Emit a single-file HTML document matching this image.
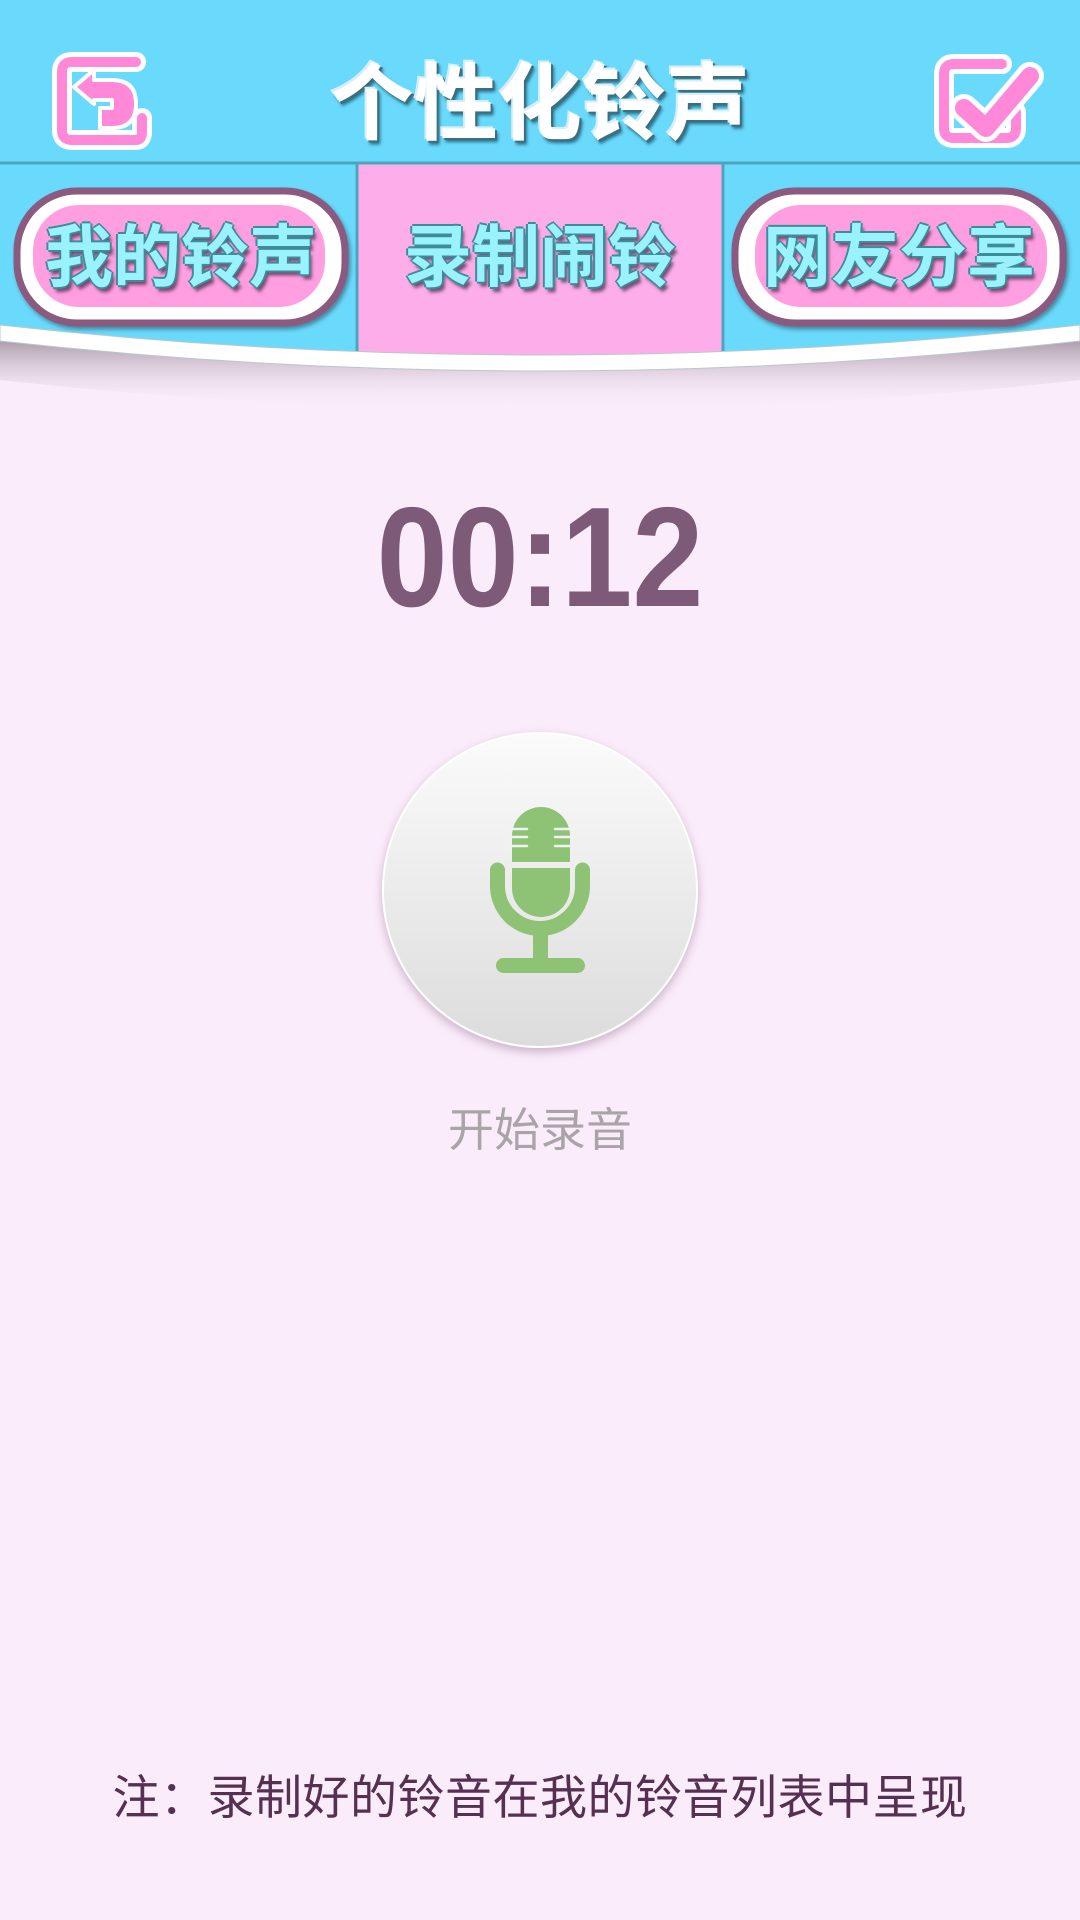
<!DOCTYPE html>
<html><head><meta charset="utf-8">
<style>
html,body{margin:0;padding:0;}
body{width:1080px;height:1920px;background:#fbecfb;position:relative;overflow:hidden;font-family:"Liberation Sans","Noto Sans CJK SC",sans-serif;}
.abs{position:absolute;}
.title{left:0;width:1080px;top:54px;text-align:center;font-size:84px;font-weight:bold;color:#fff;line-height:100px;
 text-shadow:-2px -2px 0 #d8eef6,2px 2px 0 #3a6f80,3px 4px 3px rgba(0,40,60,.6);}
.tab{font-size:68px;font-weight:bold;color:#9af3fc;line-height:80px;text-align:center;
 text-shadow:-2px 0 0 #3c8c9a,2px 0 0 #3c8c9a,0 -2px 0 #3c8c9a,0 2px 0 #3c8c9a,3px 5px 3px rgba(60,40,70,.7);}
.timer{left:0;width:1080px;top:488px;text-align:center;font-size:142px;font-weight:bold;color:#7d5a78;line-height:140px;transform:scaleX(0.9);}
.start{left:0;width:1080px;top:1100px;text-align:center;font-size:46px;color:#a8a4a8;line-height:60px;}
.note{left:0;width:1080px;top:1768px;text-align:center;font-size:47px;color:#563050;line-height:60px;letter-spacing:0.5px;}
</style></head><body>
<svg class="abs" style="left:0;top:0" width="1080" height="440" viewBox="0 0 1080 440">
<defs>
<linearGradient id="sh" x1="0" y1="0" x2="0" y2="1">
<stop offset="0" stop-color="#8a7a88" stop-opacity=".75"/>
<stop offset="1" stop-color="#fbecfb" stop-opacity="0"/>
</linearGradient>
<filter id="ds" x="-10%" y="-10%" width="130%" height="140%"><feDropShadow dx="2" dy="3" stdDeviation="2" flood-color="#2a5060" flood-opacity=".6"/></filter>
<clipPath id="cp"><path d="M0 0 L1080 0 L1080 330 Q540 390 0 330 Z"/></clipPath>
</defs>
<path d="M0 338 Q540 398 1080 338 L1080 380 Q540 440 0 380 Z" fill="url(#sh)"/>
<g clip-path="url(#cp)">
<rect x="0" y="0" width="1080" height="400" fill="#6adafc"/>
<rect x="357" y="164" width="366" height="240" fill="#fdaeea"/>
<line x1="357" y1="164" x2="357" y2="400" stroke="#4aa6bc" stroke-width="3"/>
<line x1="723" y1="164" x2="723" y2="400" stroke="#4aa6bc" stroke-width="3"/>
</g>
<line x1="0" y1="163" x2="1080" y2="163" stroke="#4aa6bc" stroke-width="3"/>
<g filter="url(#ds)">
<rect x="17" y="191" width="328" height="132" rx="60" fill="#fff" stroke="#8a5a80" stroke-width="7"/>
<rect x="735" y="191" width="328" height="132" rx="60" fill="#fff" stroke="#8a5a80" stroke-width="7"/>
</g>
<rect x="33" y="205" width="292" height="102" rx="46" fill="#ff9ee0"/>
<rect x="755" y="205" width="292" height="102" rx="46" fill="#ff9ee0"/>
<path d="M0 325 Q540 385 1080 325 L1080 341 Q540 401 0 341 Z" fill="#fff" stroke="#b8c8cc" stroke-width="1"/>
<g fill="none" stroke-linecap="round" stroke-linejoin="round">
<path d="M136 62 L72 62 Q62 62 62 72 L62 130 Q62 140 72 140 L136 140 Q142 140 142 132 L142 118" stroke="#fff" stroke-width="20"/>
<path d="M136 62 L72 62 Q62 62 62 72 L62 130 Q62 140 72 140 L136 140 Q142 140 142 132 L142 118" stroke="#ff88d8" stroke-width="10"/>
<path d="M74 87 L94 70 L94 80 L112 80 Q136 80 136 104 Q136 128 112 128 L100 128 L100 108 L112 108 L112 100 L94 100 L94 104 Z" fill="#ff88d8" stroke="#fff" stroke-width="4"/>
</g>
<g fill="none" stroke-linecap="round" stroke-linejoin="round">
<path d="M1002 64 L954 64 Q944 64 944 74 L944 128 Q944 138 954 138 L1006 138 Q1016 138 1016 128 L1016 112" stroke="#fff" stroke-width="20"/>
<path d="M1002 64 L954 64 Q944 64 944 74 L944 128 Q944 138 954 138 L1006 138 Q1016 138 1016 128 L1016 112" stroke="#ff88d8" stroke-width="10"/>
<path d="M964 108 L986 128 L1030 76" stroke="#fff" stroke-width="28"/>
<path d="M964 108 L986 128 L1030 76" stroke="#ff88d8" stroke-width="18"/>
</g>
</svg>
<div class="abs title">个性化铃声</div>
<div class="abs tab" style="left:17px;width:328px;top:218px;">我的铃声</div>
<div class="abs tab" style="left:357px;width:366px;top:218px;">录制闹铃</div>
<div class="abs tab" style="left:735px;width:328px;top:218px;">网友分享</div>
<div class="abs timer">00:12</div>
<svg class="abs" style="left:360px;top:710px" width="360" height="360" viewBox="360 710 360 360">
<defs>
<linearGradient id="cg" x1="0" y1="0" x2="0" y2="1">
<stop offset="0" stop-color="#fbfbfb"/><stop offset="1" stop-color="#dcdcdc"/>
</linearGradient>
<filter id="cs" x="-20%" y="-20%" width="140%" height="140%"><feDropShadow dx="0" dy="4" stdDeviation="5" flood-color="#8a6a88" flood-opacity=".45"/></filter>
</defs>
<circle cx="540" cy="890" r="157" fill="url(#cg)" stroke="#fff" stroke-width="2" filter="url(#cs)"/>
<g fill="#8ec274">
<path d="M512 862 L512 836 A29 29 0 0 1 570 836 L570 862 Z"/>
<path d="M512 868 L570 868 L570 888 A29 29 0 0 1 512 888 Z"/>
<path d="M497.5 870 L497.5 886 A42.5 42.5 0 0 0 582.5 886 L582.5 870" fill="none" stroke="#8ec274" stroke-width="15" stroke-linecap="round"/>
<rect x="533" y="925" width="15" height="38"/>
<rect x="496" y="958" width="89" height="15" rx="7.5"/>
</g>
<g stroke="#f2f2f2" stroke-width="2.5" stroke-linecap="round">
<line x1="510" y1="829" x2="527" y2="829"/><line x1="510" y1="837" x2="527" y2="837"/><line x1="510" y1="846" x2="527" y2="846"/>
<line x1="555" y1="829" x2="572" y2="829"/><line x1="555" y1="837" x2="572" y2="837"/><line x1="555" y1="846" x2="572" y2="846"/>
</g>
</svg>
<div class="abs start">开始录音</div>
<div class="abs note">注：录制好的铃音在我的铃音列表中呈现</div>
</body></html>
